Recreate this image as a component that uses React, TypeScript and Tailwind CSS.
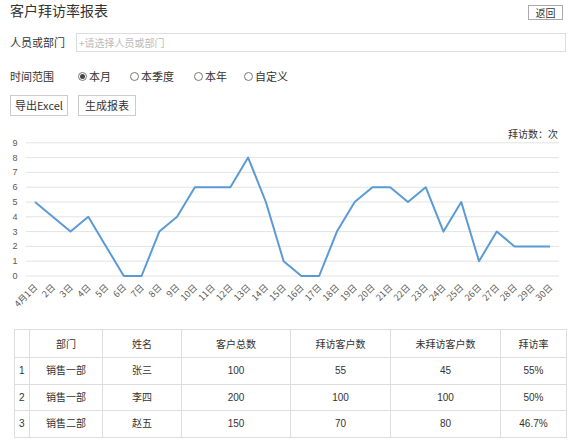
const VISITS = [5, 4, 3, 4, 2, 0, 0, 3, 4, 6, 6, 6, 8, 5, 1, 0, 0, 3, 5, 6, 6, 5, 6, 3, 5, 1, 3, 2, 2, 2];

const ROWS = [
  { no: 1, dept: "销售一部", name: "张三", total: 100, visited: 55, missed: 45, rate: "55%" },
  { no: 2, dept: "销售一部", name: "李四", total: 200, visited: 100, missed: 100, rate: "50%" },
  { no: 3, dept: "销售二部", name: "赵五", total: 150, visited: 70, missed: 80, rate: "46.7%" },
];

const FONT = "font-['Noto_Sans_CJK_SC','Noto_Sans',sans-serif]";

const X0 = 35;
const STEP = 17.76;
const Y0 = 275;
const UNIT = 14.8;

function Radio({ label, checked = false }: { label: string; checked?: boolean }) {
  return (
    <label className="flex items-center gap-[2px] text-[11px] text-[#333]">
      <span className="flex h-[9px] w-[9px] items-center justify-center rounded-full border border-[#777] bg-white">
        {checked && <span className="h-[5px] w-[5px] rounded-full bg-[#444]" />}
      </span>
      {label}
    </label>
  );
}

function VisitChart() {
  const points = VISITS.map((v, i) => `${X0 + i * STEP},${Y0 - v * UNIT}`).join(" ");
  return (
    <svg width={571} height={205} viewBox="0 120 571 205" className="block">
      <text x={558} y={137} textAnchor="end" fontSize={10} fill="#333" fontFamily="Noto Sans CJK SC, sans-serif">
        拜访数：次
      </text>
      {Array.from({ length: 10 }, (_, n) => {
        const y = Y0 - n * UNIT;
        return (
          <g key={n}>
            <line x1={26} x2={559} y1={y} y2={y} stroke="#e3e3e3" strokeWidth={1} />
            <text x={15} y={y + 3} textAnchor="middle" fontSize={9} fill="#595959" fontFamily="Liberation Sans, sans-serif">
              {n}
            </text>
          </g>
        );
      })}
      <polyline points={points} fill="none" stroke="#5b9bd5" strokeWidth={2} strokeLinejoin="round" />
      {VISITS.map((_, i) => {
        const x = X0 + i * STEP + 3;
        const y = 287;
        return (
          <text
            key={i}
            x={x}
            y={y}
            textAnchor="end"
            fontSize={9}
            fill="#595959"
            fontFamily="Noto Sans CJK SC, sans-serif"
            transform={`rotate(-45 ${x} ${y})`}
          >
            {i === 0 ? "4月1日" : `${i + 1}日`}
          </text>
        );
      })}
    </svg>
  );
}

export default function App() {
  return (
    <div className={`relative h-[440px] w-[571px] overflow-hidden bg-white text-[#333] ${FONT}`}>
      <div className="flex h-[24px] items-start justify-between pl-[10px] pr-[8px]">
        <h1 className="mt-[1px] text-[14px] leading-[18px] font-normal text-[#333]">客户拜访率报表</h1>
        <button className="mt-[5px] h-[15px] w-[35px] border border-[#aaa] bg-white text-[10px] leading-[13px] text-[#333]">
          返回
        </button>
      </div>

      <div className="mt-[9px] flex h-[19px] items-center pl-[10px] pr-[5px]">
        <span className="w-[66px] text-[11px]">人员或部门</span>
        <div className="flex h-[19px] flex-1 items-center border border-[#ddd] px-[2px] text-[10px] text-[#bbb]">
          +请选择人员或部门
        </div>
      </div>

      <div className="mt-[17px] flex h-[14px] items-center pl-[10px]">
        <span className="w-[68px] text-[11px]">时间范围</span>
        <div className="flex items-center">
          <span className="w-[52px]"><Radio label="本月" checked /></span>
          <span className="w-[64px]"><Radio label="本季度" /></span>
          <span className="w-[50px]"><Radio label="本年" /></span>
          <Radio label="自定义" />
        </div>
      </div>

      <div className="mt-[12px] flex gap-[10px] pl-[10px]">
        <button className="h-[21px] w-[58px] border border-[#ccc] bg-white text-[11px] text-[#333]">导出Excel</button>
        <button className="h-[21px] w-[58px] border border-[#ccc] bg-white text-[11px] text-[#333]">生成报表</button>
      </div>

      <div className="mt-[5px]">
        <VisitChart />
      </div>

      <table className="mt-[3px] ml-[14px] w-[552px] table-fixed border-collapse text-[10px] text-[#333]">
        <colgroup>
          <col className="w-[15px]" />
          <col className="w-[73px]" />
          <col className="w-[79px]" />
          <col className="w-[109px]" />
          <col className="w-[100px]" />
          <col className="w-[110px]" />
          <col className="w-[66px]" />
        </colgroup>
        <thead>
          <tr className="h-[28px]">
            <th className="border border-[#ddd] font-normal"></th>
            <th className="border border-[#ddd] font-normal">部门</th>
            <th className="border border-[#ddd] font-normal">姓名</th>
            <th className="border border-[#ddd] font-normal">客户总数</th>
            <th className="border border-[#ddd] font-normal">拜访客户数</th>
            <th className="border border-[#ddd] font-normal">未拜访客户数</th>
            <th className="border border-[#ddd] font-normal">拜访率</th>
          </tr>
        </thead>
        <tbody className="font-['Liberation_Sans','Noto_Sans_CJK_SC',sans-serif]">
          {ROWS.map((r) => (
            <tr key={r.no} className="h-[26.5px]">
              <td className="border border-[#ddd] pl-[4px]">{r.no}</td>
              <td className="border border-[#ddd] text-center">{r.dept}</td>
              <td className="border border-[#ddd] text-center">{r.name}</td>
              <td className="border border-[#ddd] text-center">{r.total}</td>
              <td className="border border-[#ddd] text-center">{r.visited}</td>
              <td className="border border-[#ddd] text-center">{r.missed}</td>
              <td className="border border-[#ddd] text-center">{r.rate}</td>
            </tr>
          ))}
        </tbody>
      </table>
    </div>
  );
}
